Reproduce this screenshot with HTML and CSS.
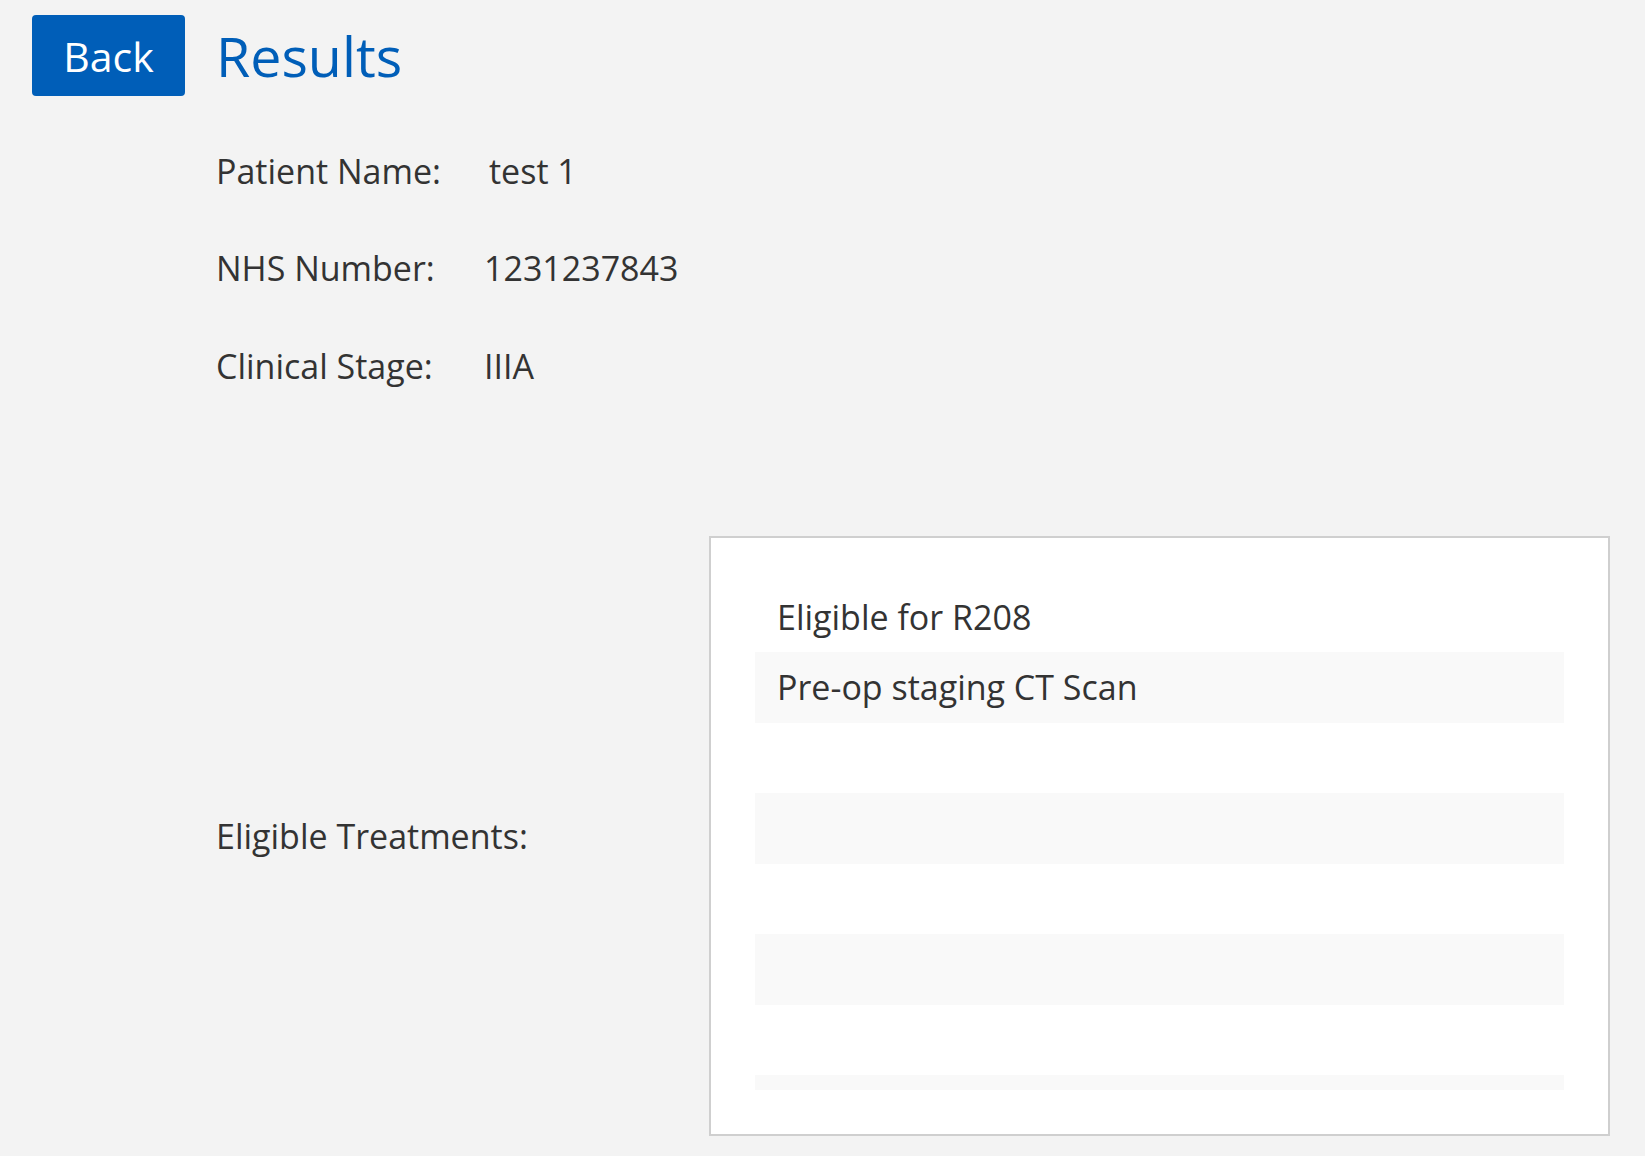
FILE: index.html
```html
<!DOCTYPE html>
<html lang="en">
<head>
<meta charset="utf-8">
<title>Results</title>
<link rel="stylesheet" href="styles.css">
</head>
<body>
<header class="header">
  <button class="back-btn" type="button">Back</button>
  <h1 class="title">Results</h1>
</header>
<main class="content">
  <dl class="info">
    <dt class="label">Patient Name:</dt>
    <dd class="value value-name">test 1</dd>
    <dt class="label">NHS Number:</dt>
    <dd class="value">1231237843</dd>
    <dt class="label">Clinical Stage:</dt>
    <dd class="value">IIIA</dd>
  </dl>
  <section class="treatments">
    <div class="label treat-label">Eligible Treatments:</div>
    <div class="treat-box">
      <ul class="treat-list">
        <li class="treat-row">Eligible for R208</li>
        <li class="treat-row">Pre-op staging CT Scan</li>
        <li class="treat-row"></li>
        <li class="treat-row"></li>
        <li class="treat-row"></li>
        <li class="treat-row"></li>
        <li class="treat-row"></li>
        <li class="treat-row"></li>
      </ul>
    </div>
  </section>
</main>
</body>
</html>
```
FILE: styles.css
```css
html, body {
  margin: 0;
  padding: 0;
}
body {
  background: #f3f3f3;
  font-family: "Segoe UI", "Open Sans", "Noto Sans", sans-serif;
  color: #333333;
  width: 1645px;
  height: 1156px;
  overflow: hidden;
}
.header {
  display: flex;
  align-items: center;
  gap: 31px;
  padding: 15px 0 0 32px;
}
.back-btn {
  width: 153px;
  height: 81px;
  background: #005eb8;
  color: #ffffff;
  border: none;
  border-radius: 4px;
  font-family: inherit;
  font-size: 41px;
  padding: 0;
  display: flex;
  align-items: center;
  justify-content: center;
}
.title {
  margin: 0;
  font-size: 55.5px;
  font-weight: 400;
  color: #005eb8;
  line-height: 1;
}
.content {
  padding-left: 216px;
}
.info {
  display: grid;
  grid-template-columns: 268px auto;
  grid-auto-rows: 97.5px;
  margin: 26px 0 0 0;
  align-items: center;
}
.label, .value {
  margin: 0;
  font-size: 34px;
  line-height: 40px;
}
.value-name {
  padding-left: 5px;
}
.treatments {
  display: flex;
  align-items: center;
  margin-top: 121px;
}
.treat-label {
  width: 493px;
  flex-shrink: 0;
}
.treat-box {
  width: 809px;
  height: 508px;
  padding: 44px;
  background: #ffffff;
  border: 2px solid #cfcfcf;
}
.treat-list {
  list-style: none;
  margin: 0;
  padding: 0;
  height: 508px;
  overflow: hidden;
}
.treat-row {
  height: 70.5px;
  box-sizing: border-box;
  padding-left: 22px;
  font-size: 34px;
  line-height: 70.5px;
}
.treat-row:nth-child(even) {
  background: #f9f9f9;
}
```
